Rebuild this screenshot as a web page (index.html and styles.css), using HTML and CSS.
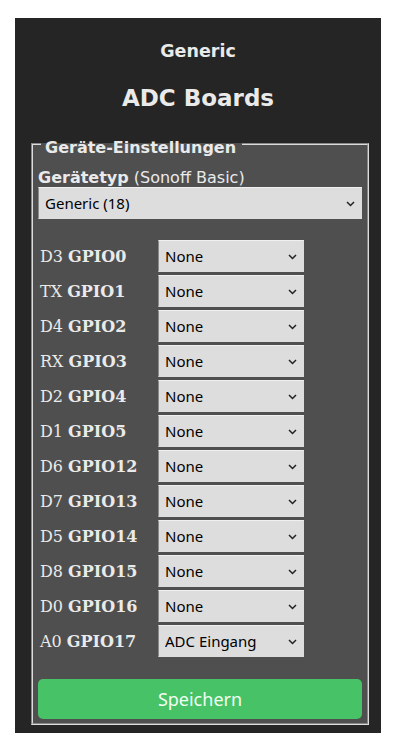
FILE: index.html
```html
<!DOCTYPE html>
<html>
<head>
  <title>Generic - Geräte-Einstellungen</title>
  <link rel="stylesheet" href="styles.css">
</head>
<body>
  <div class="page">
    <h3 class="device">Generic</h3>
    <h2 class="title">ADC Boards</h2>

    <fieldset class="settings">
      <legend>Geräte-Einstellungen</legend>
      <p class="type-label"><b>Gerätetyp</b> (Sonoff Basic)</p>
      <div class="select-wrap">
        <select class="select">
          <option>Generic (18)</option>
        </select>
        <svg class="chevron" width="9" height="6" viewBox="0 0 9 6"><path d="M1 1l3.5 3.5L8 1" fill="none" stroke="#222" stroke-width="1.5"/></svg>
      </div>

      <div class="gpio-grid">
        <span class="pin">D3 <b>GPIO0</b></span>
        <div class="select-wrap"><select class="select"><option>None</option></select><svg class="chevron" width="9" height="6" viewBox="0 0 9 6"><path d="M1 1l3.5 3.5L8 1" fill="none" stroke="#222" stroke-width="1.5"/></svg></div>

        <span class="pin">TX <b>GPIO1</b></span>
        <div class="select-wrap"><select class="select"><option>None</option></select><svg class="chevron" width="9" height="6" viewBox="0 0 9 6"><path d="M1 1l3.5 3.5L8 1" fill="none" stroke="#222" stroke-width="1.5"/></svg></div>

        <span class="pin">D4 <b>GPIO2</b></span>
        <div class="select-wrap"><select class="select"><option>None</option></select><svg class="chevron" width="9" height="6" viewBox="0 0 9 6"><path d="M1 1l3.5 3.5L8 1" fill="none" stroke="#222" stroke-width="1.5"/></svg></div>

        <span class="pin">RX <b>GPIO3</b></span>
        <div class="select-wrap"><select class="select"><option>None</option></select><svg class="chevron" width="9" height="6" viewBox="0 0 9 6"><path d="M1 1l3.5 3.5L8 1" fill="none" stroke="#222" stroke-width="1.5"/></svg></div>

        <span class="pin">D2 <b>GPIO4</b></span>
        <div class="select-wrap"><select class="select"><option>None</option></select><svg class="chevron" width="9" height="6" viewBox="0 0 9 6"><path d="M1 1l3.5 3.5L8 1" fill="none" stroke="#222" stroke-width="1.5"/></svg></div>

        <span class="pin">D1 <b>GPIO5</b></span>
        <div class="select-wrap"><select class="select"><option>None</option></select><svg class="chevron" width="9" height="6" viewBox="0 0 9 6"><path d="M1 1l3.5 3.5L8 1" fill="none" stroke="#222" stroke-width="1.5"/></svg></div>

        <span class="pin">D6 <b>GPIO12</b></span>
        <div class="select-wrap"><select class="select"><option>None</option></select><svg class="chevron" width="9" height="6" viewBox="0 0 9 6"><path d="M1 1l3.5 3.5L8 1" fill="none" stroke="#222" stroke-width="1.5"/></svg></div>

        <span class="pin">D7 <b>GPIO13</b></span>
        <div class="select-wrap"><select class="select"><option>None</option></select><svg class="chevron" width="9" height="6" viewBox="0 0 9 6"><path d="M1 1l3.5 3.5L8 1" fill="none" stroke="#222" stroke-width="1.5"/></svg></div>

        <span class="pin">D5 <b>GPIO14</b></span>
        <div class="select-wrap"><select class="select"><option>None</option></select><svg class="chevron" width="9" height="6" viewBox="0 0 9 6"><path d="M1 1l3.5 3.5L8 1" fill="none" stroke="#222" stroke-width="1.5"/></svg></div>

        <span class="pin">D8 <b>GPIO15</b></span>
        <div class="select-wrap"><select class="select"><option>None</option></select><svg class="chevron" width="9" height="6" viewBox="0 0 9 6"><path d="M1 1l3.5 3.5L8 1" fill="none" stroke="#222" stroke-width="1.5"/></svg></div>

        <span class="pin">D0 <b>GPIO16</b></span>
        <div class="select-wrap"><select class="select"><option>None</option></select><svg class="chevron" width="9" height="6" viewBox="0 0 9 6"><path d="M1 1l3.5 3.5L8 1" fill="none" stroke="#222" stroke-width="1.5"/></svg></div>

        <span class="pin">A0 <b>GPIO17</b></span>
        <div class="select-wrap"><select class="select"><option>ADC Eingang</option></select><svg class="chevron" width="9" height="6" viewBox="0 0 9 6"><path d="M1 1l3.5 3.5L8 1" fill="none" stroke="#222" stroke-width="1.5"/></svg></div>
      </div>

      <button class="button">Speichern</button>
    </fieldset>
  </div>
</body>
</html>
```

FILE: styles.css
```css
body {
  margin: 0;
  padding: 18px 15px;
  background: #ffffff;
  font-family: "DejaVu Sans", Verdana, sans-serif;
}
.page {
  width: 366px;
  box-sizing: border-box;
  background: #252525;
  color: #eaeaea;
  padding: 21px 0 8px;
}
.device {
  margin: 0;
  text-align: center;
  font-size: 17.5px;
  line-height: 24px;
}
.title {
  margin: 20px 0 0;
  text-align: center;
  font-size: 23px;
  line-height: 30px;
}
.settings {
  margin: 17px 12px 0 16px;
  padding: 0 5px 4px;
  background: #4f4f4f;
  border: 2px groove #dcdcdc;
}
.settings legend {
  margin-left: 3px;
  padding: 8px 6px 0 4px;
  font-size: 16px;
  font-weight: bold;
  line-height: 19px;
}
.type-label {
  margin: 12px 0 0;
  font-size: 16px;
  line-height: 18px;
}
.select-wrap {
  position: relative;
  height: 32px;
}
.select {
  -webkit-appearance: none;
  appearance: none;
  width: 100%;
  height: 32px;
  margin: 0;
  padding: 0 20px 0 6px;
  background: #dddddd;
  color: #000000;
  border: 1px solid #dddddd;
  border-top-color: #f0f0f0;
  border-left-color: #8a8a8a;
  border-radius: 0;
  font-family: "Noto Sans", "Liberation Sans", sans-serif;
  font-size: 15px;
}
.chevron {
  position: absolute;
  right: 7px;
  top: 14px;
  pointer-events: none;
}
.gpio-grid {
  display: grid;
  grid-template-columns: 120px 146px;
  row-gap: 3px;
  margin-top: 21px;
  align-items: center;
}
.pin {
  font-family: "DejaVu Serif", "Liberation Serif", serif;
  font-size: 16px;
  padding-left: 2px;
}
.button {
  display: block;
  width: 100%;
  height: 40px;
  margin-top: 22px;
  border: none;
  border-radius: 5px;
  background: #47c266;
  color: #f2fff2;
  font-family: "Noto Sans", sans-serif;
  font-size: 18px;
  cursor: pointer;
}
```
